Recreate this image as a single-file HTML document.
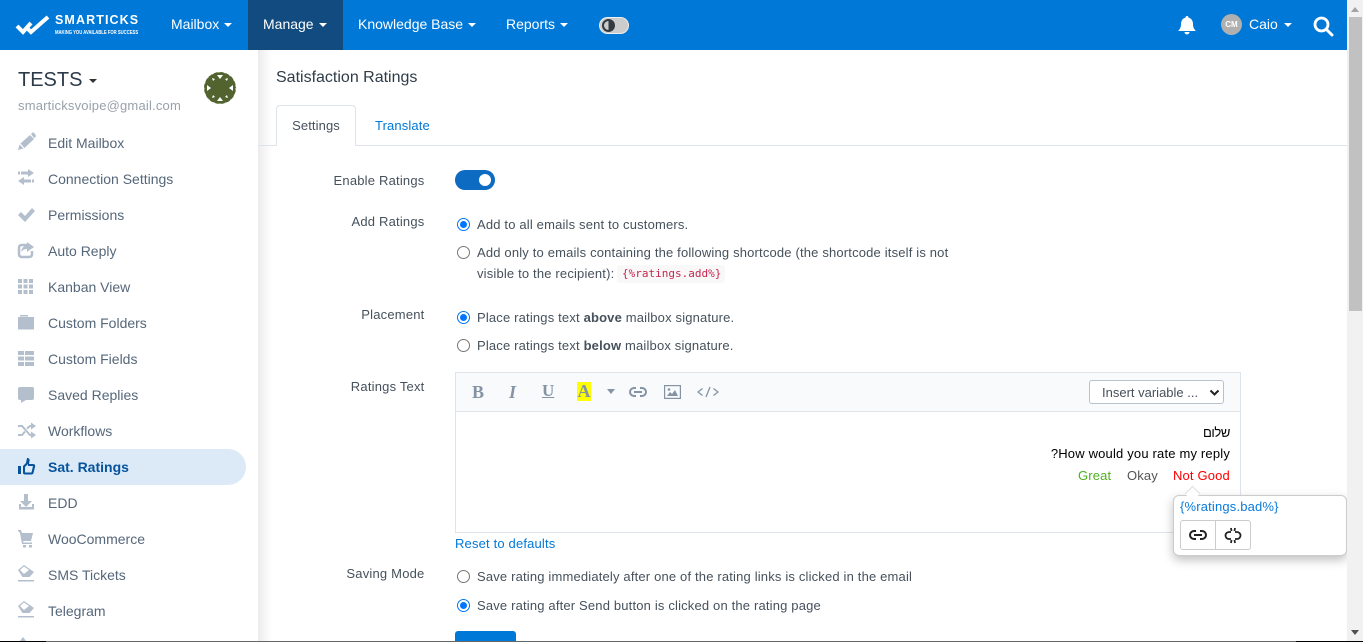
<!DOCTYPE html>
<html><head><meta charset="utf-8"><style>
*{box-sizing:border-box}
html,body{margin:0;padding:0;width:1363px;height:642px;overflow:hidden;background:#fff;font-family:"Liberation Sans","Noto Sans CJK SC",sans-serif;font-size:13px;color:#44505c}
.a{position:absolute;white-space:nowrap}
.nav{left:0;top:0;width:1347px;height:50px;background:#0078d7}
.n{color:#fff;font-size:14px;top:16px;line-height:17px}
.car{display:inline-block;width:0;height:0;border:4px solid transparent;border-top-color:currentColor;border-bottom:0;vertical-align:middle;margin-left:5px}
.m{left:48px;font-size:14px;color:#56677a;line-height:18px}
.l{font-size:13px;color:#46515c;line-height:18px;letter-spacing:.2px}
.t{font-size:13px;color:#46515c;line-height:18px;left:477px;letter-spacing:.17px}
.r{position:absolute;left:457px;width:13px;height:13px;border-radius:50%;border:1px solid #767676;background:#fff}
.r.on{border:1px solid #0075ff;background:#fff}
.r.on:after{content:"";position:absolute;left:2px;top:2px;width:7px;height:7px;border-radius:50%;background:#0075ff}
</style></head><body>
<div class="a nav"></div>
<div class="a" style="left:248px;top:0;width:95px;height:50px;background:#114b7f"></div>
<svg class="a" style="left:15px;top:13px" width="36" height="24" viewBox="0 0 36 24"><path d="M2 13l6 6 8-9M13 16l3 3 17-15" fill="none" stroke="#fff" stroke-width="4"/></svg>
<div class="a" style="left:55px;top:13px;color:#fff;font-weight:bold;font-size:12.5px;letter-spacing:1.1px;line-height:14px">SMARTICKS</div>
<div class="a" style="left:55px;top:30px;color:#fff;font-size:5px;font-weight:bold;line-height:6px;transform-origin:0 0;transform:scaleX(.84)">MAKING YOU AVAILABLE FOR SUCCESS</div>
<div class="a n" style="left:171px">Mailbox<span class="car"></span></div>
<div class="a n" style="left:263px">Manage<span class="car"></span></div>
<div class="a n" style="left:358px">Knowledge Base<span class="car"></span></div>
<div class="a n" style="left:506px">Reports<span class="car"></span></div>
<div class="a" style="left:599px;top:17px;width:30px;height:17px;background:#ccc;border:1px solid #eee;border-radius:9px"></div>
<div class="a" style="left:602px;top:19px;width:13px;height:13px;border-radius:50%;border:2px solid #343a40;background:linear-gradient(90deg,#ccc 50%,#343a40 50%)"></div>
<svg class="a" style="left:1178px;top:16px" width="18" height="19" viewBox="0 0 18 19"><path d="M9 0c1 0 1.500.7 1.500 1.600C13.500 2.300 15 5 15 8c0 3 1 5 2.500 6.500V15H.5v-.5C2 13 3 11 3 8c0-3 1.500-5.700 4.500-6.400C7.500.7 8 0 9 0zM6.500 16h5a2.500 2.500 0 0 1-5 0z" fill="#fff"/></svg>
<div class="a" style="left:1221px;top:14px;width:21px;height:21px;border-radius:50%;background:#b0b0b0;color:#fff;font-size:8px;font-weight:bold;text-align:center;line-height:21px">CM</div>
<div class="a n" style="left:1249px">Caio<span class="car" style="margin-left:6px"></span></div>
<svg class="a" style="left:1313px;top:16px" width="21" height="21" viewBox="0 0 21 21"><circle cx="8.500" cy="8.500" r="6.500" fill="none" stroke="#fff" stroke-width="2.800"/><path d="M13.500 13.500l5.500 5.500" stroke="#fff" stroke-width="3" stroke-linecap="round"/></svg>

<div class="a" style="left:258px;top:50px;width:14px;height:592px;background:linear-gradient(90deg,#ececec,#fff)"></div>
<div class="a" style="left:18px;top:69px;font-size:20px;color:#2c3a4a;line-height:23px">TESTS<span class="car" style="border-width:4.500px;border-bottom:0;margin-left:7px;color:#333"></span></div>
<div class="a" style="left:18px;top:97px;font-size:13px;color:#98a1aa;line-height:18px;letter-spacing:.19px">smarticksvoipe@gmail.com</div>
<svg class="a" style="left:204px;top:72px" width="32" height="32" viewBox="0 0 32 32"><circle cx="16" cy="16" r="16" fill="#53632f"/><circle cx="16" cy="16" r="15.800" fill="none" stroke="#fff" stroke-width=".5" stroke-dasharray="2 4"/><path d="M13 3h6l-3 4zM13 29h6l-3-4zM3 13v6l4-3zM29 13v6l-4-3zM8 6l3 1-2 2zM24 6l-3 1 2 2zM8 26l3-1-2-2zM24 26l-3-1 2-2z" fill="#fff"/></svg>

<svg class="a" style="left:0;top:125px" width="40" height="517" fill="#b3bfcc" stroke="none">
<path d="M18 25l1.500-5.500 4 4zM20.500 18.500L30 10l4 4-9.500 9zM31 9l1.500-1.500q1-.5 2.500 1.500t.5 3L34 13z"/>
<path d="M18 46.500h2v3h-2zM21 46.500h7V44l6 4-6 4v-2.500h-7zM32 54.500h2v3h-2zM31 54.500h-7V52l-6 4 6 4v-2.500h7z"/>
<path d="M18 90l3-3 4 4 7-8 3 3-10 11z"/>
<path d="M27 120h-5q-3 0-3 3v6q0 3 3 3h7q3 0 3-3v-3" fill="none" stroke="#b3bfcc" stroke-width="2.500"/>
<path d="M27 117l7 5-7 5v-3q-4 0-6 3 1-6 6-7z"/>
<path d="M18 154h4v4h-4zM23.500 154h4v4h-4zM29 154h4v4h-4zM18 159.500h4v4h-4zM23.500 159.500h4v4h-4zM29 159.500h4v4h-4zM18 165h4v4h-4zM23.500 165h4v4h-4zM29 165h4v4h-4z"/>
<path d="M18 192h16v12.500H18zM20 190h8v1.500h-8z"/>
<path d="M18 226h6v4h-6zM25 226h9v4h-9zM18 231.500h6v4h-6zM25 231.500h9v4h-9zM18 237h6v4h-6zM25 237h9v4h-9z"/>
<path d="M20 262h12q2 0 2 2v9q0 2-2 2H26l-5 3v-3h-1q-2 0-2-2v-9q0-2 2-2z"/>
<path d="M18 301h4l8 9h2M18 310h4l3-3.500M27 303.500l3-2.500h2" fill="none" stroke="#b3bfcc" stroke-width="2"/>
<path d="M31 297.500l5 3.500-5 3.500zM31 306.500l5 3.500-5 3.500z"/>
<path d="M24 369h4v7h4l-6 6-6-6h4zM19 379h2v3h11v-3h2v5.500H19z"/>
<path d="M18 405h3l1 3h11l-2 8H23l.5 1.500H32v1.500H22l-2-11-1-1.500h-1zM23 420h3v2.500h-3zM29 420h3v2.500h-3z"/>
<path d="M18 445l6-5 10 7-4.500 5h-7zM18 455h16v1.500H18z"/>
<path d="M20 445l4-3.500 5 3.500-5 4z" fill="#fff"/>
<path d="M18 481l6-5 10 7-4.500 5h-7zM18 491h16v1.500H18z"/>
<path d="M20 481l4-3.500 5 3.500-5 4z" fill="#fff"/>
<path d="M20 516l3-4 3 4z"/>
</svg>
<div class="a" style="left:0;top:449px;width:246px;height:36px;background:#dceaf8;border-radius:0 18px 18px 0"></div>
<svg class="a" style="left:17px;top:457px" width="19" height="19" viewBox="0 0 19 19"><path d="M1 9h3v8H1zM6 9l3-3 1-5c2 0 3 1 2.500 3l-.5 3h4c2 0 2.500 1.500 2 3l-1.500 6c-.3 1-1 1.500-2 1.500H8c-1 0-2-.5-2-1.500z" fill="#06539c"/><path d="M8 10l3-3v-1l0 3h5l-1.500 6.500H8z" fill="#dceaf8"/></svg>

<div class="a m" style="top:134px">Edit Mailbox</div>
<div class="a m" style="top:170px">Connection Settings</div>
<div class="a m" style="top:206px">Permissions</div>
<div class="a m" style="top:242px">Auto Reply</div>
<div class="a m" style="top:278px">Kanban View</div>
<div class="a m" style="top:314px">Custom Folders</div>
<div class="a m" style="top:350px">Custom Fields</div>
<div class="a m" style="top:386px">Saved Replies</div>
<div class="a m" style="top:422px">Workflows</div>
<div class="a m" style="top:458px;color:#06539c;font-weight:bold">Sat. Ratings</div>
<div class="a m" style="top:494px">EDD</div>
<div class="a m" style="top:530px">WooCommerce</div>
<div class="a m" style="top:566px">SMS Tickets</div>
<div class="a m" style="top:602px">Telegram</div>

<div class="a" style="left:276px;top:68px;font-size:16px;color:#2f3c48;line-height:19px">Satisfaction Ratings</div>
<div class="a" style="left:258px;top:145px;width:1089px;height:1px;background:#dee4ea"></div>
<div class="a" style="left:276px;top:105px;width:80px;height:41px;background:#fff;border:1px solid #dee4ea;border-bottom:0;border-radius:4px 4px 0 0;text-align:center;line-height:40px;color:#46515c;font-size:13px;letter-spacing:.1px">Settings</div>
<div class="a" style="left:375px;top:117px;color:#0078d7;font-size:13px;line-height:18px;letter-spacing:.12px">Translate</div>

<div class="a l" style="right:938.5px;top:172px">Enable Ratings</div>
<div class="a" style="left:455px;top:170px;width:40px;height:20px;border-radius:10px;background:#0d6bc2"></div>
<div class="a" style="left:479px;top:174px;width:12px;height:12px;border-radius:50%;background:#fff"></div>

<div class="a l" style="right:938.5px;top:213px">Add Ratings</div>
<div class="r on" style="top:218px"></div><div class="a t" style="top:216px">Add to all emails sent to customers.</div>
<div class="r" style="top:246px"></div><div class="a t" style="top:244px">Add only to emails containing the following shortcode (the shortcode itself is not</div>
<div class="a t" style="top:265px">visible to the recipient):</div>
<div class="a" style="left:617px;top:265px;height:18px;width:108px;background:#f8f8f9;border-radius:3px;font-family:'DejaVu Sans Mono','Liberation Mono',monospace;font-size:11px;line-height:18px;color:#c7254e;padding-left:5px">{%ratings.add%}</div>

<div class="a l" style="right:938.5px;top:306px">Placement</div>
<div class="r on" style="top:311px"></div><div class="a t" style="top:309px">Place ratings text <b>above</b> mailbox signature.</div>
<div class="r" style="top:339px"></div><div class="a t" style="top:337px">Place ratings text <b>below</b> mailbox signature.</div>

<div class="a l" style="right:938.5px;top:378px">Ratings Text</div>
<div class="a" style="left:455px;top:372px;width:786px;height:161px;border:1px solid #dee4ea;background:#fff"></div>
<div class="a" style="left:456px;top:373px;width:784px;height:39px;border-bottom:1px solid #dee4ea;background:#f9fafb"></div>
<div class="a" style="left:472px;top:382px;font:bold 18px/20px 'Liberation Serif',serif;color:#8494a5">B</div>
<div class="a" style="left:509px;top:382px;font:italic bold 18px/20px 'Liberation Serif',serif;color:#8494a5">I</div>
<div class="a" style="left:542px;top:381px;font:bold 17px/20px 'Liberation Serif',serif;color:#8494a5;text-decoration:underline">U</div>
<div class="a" style="left:577px;top:382px;width:14px;height:19px;background:#ff0;font:bold 18px/19px 'Liberation Serif',serif;color:#8494a5;text-align:center">A</div>
<div class="a" style="left:607px;top:389px;border:4px solid transparent;border-top:5px solid #8494a5;border-bottom:0"></div>
<svg class="a" style="left:629px;top:387px" width="18" height="10" viewBox="0 0 18 10" fill="none" stroke="#8494a5" stroke-width="2"><path d="M7 1H5a4 4 0 0 0 0 8h2M11 1h2a4 4 0 0 1 0 8h-2M5 5h8"/></svg>
<svg class="a" style="left:664px;top:385px" width="17" height="14" viewBox="0 0 17 14"><rect x=".6" y=".6" width="15.800" height="12.800" fill="none" stroke="#8494a5" stroke-width="1.200"/><path d="M3 11l3-4 2 2 3-4 3 6z" fill="#8494a5"/><circle cx="5" cy="4.500" r="1.300" fill="#8494a5"/></svg>
<svg class="a" style="left:697px;top:386px" width="22" height="12" viewBox="0 0 22 12" fill="none" stroke="#8494a5" stroke-width="1.300"><path d="M5.500 2.500L1 6l4.500 3.500M16.500 2.500L21 6l-4.500 3.500M13 1L9 11"/></svg>
<div class="a" style="left:1089px;top:380px;width:135px;height:24px;border:1px solid #b8c2cc;border-radius:3px;background:#fff;padding-left:12px;font-size:13px;line-height:23px;color:#46515c">Insert variable ...</div>
<svg class="a" style="left:1209px;top:389px" width="11" height="8" viewBox="0 0 11 8"><path d="M1.500 1.500l4 4 4-4" fill="none" stroke="#222" stroke-width="2"/></svg>
<div class="a" style="right:133px;top:424px;font-size:13px;color:#000;line-height:18px;letter-spacing:-.4px">שלום</div>
<div class="a" style="right:133px;top:445px;font-size:13px;color:#000;line-height:18px;letter-spacing:.18px">?How would you rate my reply</div>
<div class="a" style="left:1078px;top:467px;font-size:13px;color:#50b020;line-height:18px;letter-spacing:.15px">Great</div>
<div class="a" style="left:1127px;top:467px;font-size:13px;color:#555;line-height:18px;letter-spacing:.15px">Okay</div>
<div class="a" style="left:1173px;top:467px;font-size:13px;color:#f00;line-height:18px;letter-spacing:.15px">Not Good</div>
<div class="a" style="left:455px;top:535px;color:#0078d7;font-size:13px;line-height:18px;letter-spacing:.17px">Reset to defaults</div>

<div class="a" style="left:1173px;top:495px;width:174px;height:61px;background:#fff;border:1px solid #ccc;border-radius:6px;box-shadow:0 4px 10px rgba(0,0,0,.25)"></div>
<div class="a" style="left:1187px;top:488px;width:11px;height:11px;background:#fff;border:1px solid #ddd;border-right:0;border-bottom:0;transform:rotate(45deg)"></div>
<div class="a" style="left:1180px;top:498px;color:#0a7bdb;font-size:13px;line-height:18px;letter-spacing:.17px">{%ratings.bad%}</div>
<div class="a" style="left:1180px;top:520px;width:71px;height:30px;border:1px solid #ccc;border-radius:3px;background:#fff"></div>
<div class="a" style="left:1215px;top:520px;width:1px;height:30px;background:#ccc"></div>
<svg class="a" style="left:1189px;top:530px" width="18" height="10" viewBox="0 0 18 10" fill="none" stroke="#222" stroke-width="2"><path d="M7 1H5a4 4 0 0 0 0 8h2M11 1h2a4 4 0 0 1 0 8h-2M5 5h8"/></svg>
<svg class="a" style="left:1224px;top:526px" width="18" height="19" viewBox="0 0 18 19" fill="none" stroke="#222" stroke-width="1.800"><path d="M7 6H5a3.500 3.500 0 0 0 0 7h2M11 6h2a3.500 3.500 0 0 1 0 7h-2M7 2l.5 3M11 2l-.5 3M7 17l.5-3M11 17l-.5-3"/></svg>

<div class="a l" style="right:938.5px;top:565px">Saving Mode</div>
<div class="r" style="top:570px"></div><div class="a t" style="top:568px">Save rating immediately after one of the rating links is clicked in the email</div>
<div class="r on" style="top:599px"></div><div class="a t" style="top:597px">Save rating after Send button is clicked on the rating page</div>
<div class="a" style="left:455px;top:631px;width:61px;height:11px;background:#0078d7;border-radius:3px 3px 0 0"></div>

<div class="a" style="left:1347px;top:0;width:16px;height:642px;background:#f1f1f1"></div>
<div class="a" style="left:1349px;top:17px;width:13px;height:294px;background:#c1c1c1"></div>
<div class="a" style="left:1351px;top:7px;border:4px solid transparent;border-top:0;border-bottom:5px solid #a3a3a3"></div>
<div class="a" style="left:1351px;top:630px;border:4px solid transparent;border-bottom:0;border-top:5px solid #505050"></div>
<div class="a" style="left:0;top:641px;width:1363px;height:1px;background:#000"></div>
<div class="a" style="left:46px;top:641px;width:1250px;height:1px;background:#666"></div>
</body></html>
